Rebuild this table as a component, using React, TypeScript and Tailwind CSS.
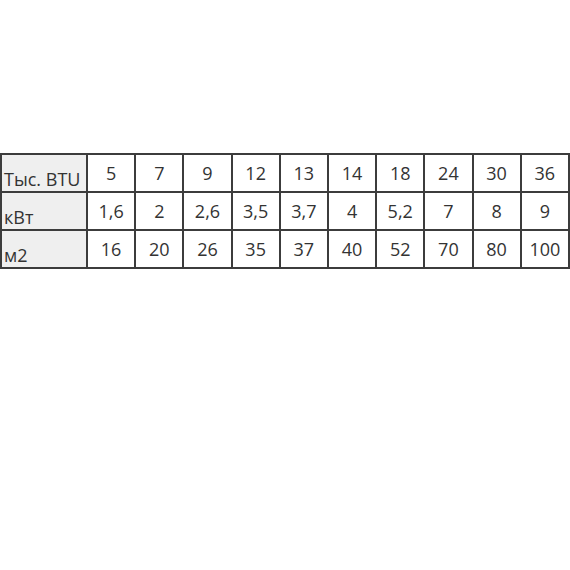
const rows = [
  { label: "Тыс. BTU", values: ["5", "7", "9", "12", "13", "14", "18", "24", "30", "36"] },
  { label: "кВт", values: ["1,6", "2", "2,6", "3,5", "3,7", "4", "5,2", "7", "8", "9"] },
  { label: "м2", values: ["16", "20", "26", "35", "37", "40", "52", "70", "80", "100"] },
];

export default function App() {
  return (
    <div className="w-[570px] h-[570px] bg-white pt-[153px]" style={{ fontFamily: '"Open Sans", "Liberation Sans", sans-serif' }}>
      <table className="w-[570px] table-fixed border-collapse text-[18px] text-[#333]">
        <colgroup>
          <col className="w-[86px]" />
          {rows[0].values.map((_, i) => (
            <col key={i} />
          ))}
        </colgroup>
        <tbody>
          {rows.map((r) => (
            <tr key={r.label}>
              <td className="h-[38px] border-2 border-[#3c3c3c] bg-[#efefef] pl-[2px] pb-[3px] align-bottom leading-none whitespace-nowrap">
                {r.label}
              </td>
              {r.values.map((v, i) => (
                <td key={i} className="h-[38px] border-2 border-[#3c3c3c] text-center align-middle leading-none">
                  {v}
                </td>
              ))}
            </tr>
          ))}
        </tbody>
      </table>
    </div>
  );
}
